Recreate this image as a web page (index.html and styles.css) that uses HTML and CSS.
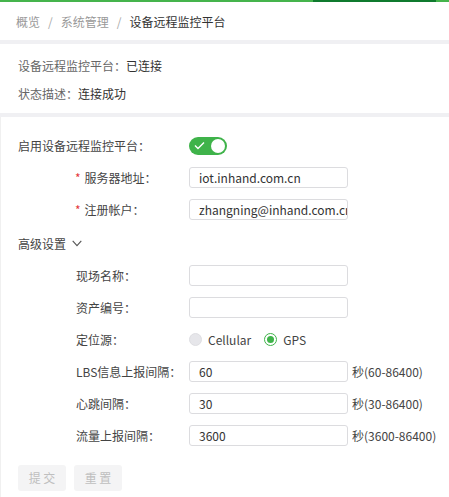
FILE: index.html
```html
<!DOCTYPE html>
<html lang="zh-CN">
<head>
<meta charset="utf-8">
<link rel="stylesheet" href="styles.css">
</head>
<body>
<div class="topbar"><span class="seg1"></span><span class="seg2"></span><span class="seg3"></span></div>
<div class="breadcrumb">
  <span class="crumb">概览</span><span class="sep">/</span><span class="crumb">系统管理</span><span class="sep">/</span><span class="crumb current">设备远程监控平台</span>
</div>
<div class="band"></div>
<div class="status">
  <div class="status-line"><span class="k">设备远程监控平台：</span><span class="v">已连接</span></div>
  <div class="status-line"><span class="k">状态描述：</span><span class="v">连接成功</span></div>
</div>
<div class="band"></div>
<div class="form">
  <div class="row top">
    <div class="label wide">启用设备远程监控平台：</div>
    <div class="toggle">
      <svg class="check" width="11" height="9" viewBox="0 0 11 9"><path d="M1 4.5 L4 7.5 L10 1.5" fill="none" stroke="#fff" stroke-width="1.4"/></svg>
      <span class="knob"></span>
    </div>
  </div>
  <div class="row">
    <div class="label"><span class="req">*</span>服务器地址：</div>
    <div class="input">iot.inhand.com.cn</div>
  </div>
  <div class="row">
    <div class="label"><span class="req">*</span>注册帐户：</div>
    <div class="input">zhangning@inhand.com.cn</div>
  </div>
  <div class="row adv">
    <div class="adv-title">高级设置
      <svg class="chev" width="10" height="7" viewBox="0 0 10 7"><path d="M0.7 0.8 L5 5.6 L9.3 0.8" fill="none" stroke="#555" stroke-width="1.1"/></svg>
    </div>
  </div>
  <div class="row">
    <div class="label">现场名称：</div>
    <div class="input"></div>
  </div>
  <div class="row">
    <div class="label">资产编号：</div>
    <div class="input"></div>
  </div>
  <div class="row">
    <div class="label">定位源：</div>
    <div class="radios">
      <span class="radio off"></span><span class="rtext">Cellular</span>
      <span class="radio on"><span class="dot"></span></span><span class="rtext">GPS</span>
    </div>
  </div>
  <div class="row">
    <div class="label">LBS信息上报间隔：</div>
    <div class="input">60</div>
    <div class="suffix">秒(60-86400)</div>
  </div>
  <div class="row">
    <div class="label">心跳间隔：</div>
    <div class="input">30</div>
    <div class="suffix">秒(30-86400)</div>
  </div>
  <div class="row">
    <div class="label">流量上报间隔：</div>
    <div class="input">3600</div>
    <div class="suffix">秒(3600-86400)</div>
  </div>
  <div class="buttons">
    <div class="btn">提 交</div>
    <div class="btn">重 置</div>
  </div>
</div>
</body>
</html>
```
FILE: styles.css
```css
* { box-sizing: border-box; }
html, body { margin: 0; padding: 0; background: #fff; }
body {
  font-family: "Noto Sans CJK SC", "Liberation Sans", sans-serif;
  font-size: 12px;
  color: #333;
  width: 449px;
  height: 497px;
  overflow: hidden;
}
.topbar { display: flex; height: 2px; }
.topbar .seg1 { width: 313px; background: #45b44c; }
.topbar .seg2 { width: 123px; background: #0f7a2e; }
.topbar .seg3 { flex: 1; background: #45b44c; }
.breadcrumb {
  height: 38px;
  display: flex;
  align-items: center;
  padding-left: 16px;
  color: #999;
}
.breadcrumb .sep { margin: 0 8px; color: #aaa; }
.breadcrumb .current { color: #333; }
.band { height: 4px; background: #f0f0f3; }
.status { padding: 8px 18px 5px; }
.status-line { height: 28px; line-height: 28px; }
.status-line .k { color: #666; }
.status-line .v { color: #333; }
.form {
  padding: 18px 0 0 17px;
  border-left: 1px solid #f0f0f0;
  height: 380px;
}
.row {
  display: flex;
  align-items: center;
  height: 21px;
  margin-top: 11px;
}
.row.top { margin-top: 0; }
.row.adv { margin-top: 13px; }
.label {
  width: 113px;
  margin-left: 58px;
  color: #444;
  white-space: nowrap;
}
.label.wide { width: 171px; margin-left: 0; }
.req { color: #e4393c; margin-right: 4px; margin-left: -1px; }
.input {
  width: 159px;
  height: 21px;
  border: 1px solid #dcdcdf;
  border-radius: 3px;
  padding: 0 9px;
  line-height: 19px;
  color: #333;
  white-space: nowrap;
  overflow: hidden;
}
.suffix { margin-left: 4px; color: #444; white-space: nowrap; }
.toggle {
  position: relative;
  width: 38px;
  height: 18px;
  border-radius: 9px;
  background: #3fb34a;
}
.toggle .check { position: absolute; left: 5px; top: 4.5px; }
.toggle .knob {
  position: absolute;
  right: 2px;
  top: 2px;
  width: 14px;
  height: 14px;
  border-radius: 50%;
  background: #fff;
}
.adv-title { display: flex; align-items: center; color: #444; }
.chev { margin-left: 6px; }
.radios { display: flex; align-items: center; }
.radio {
  width: 13px;
  height: 13px;
  border-radius: 50%;
  display: inline-flex;
  align-items: center;
  justify-content: center;
}
.radio.off { background: #e6e6ea; border: 1px solid #dedee2; }
.radio.on { border: 1px solid #3fb34a; background: #fff; margin-left: 13px; }
.radio .dot { width: 7px; height: 7px; border-radius: 50%; background: #3fb34a; }
.rtext { margin-left: 6px; color: #444; }
.buttons { display: flex; gap: 8px; margin-top: 19px; }
.btn {
  width: 48px;
  height: 26px;
  line-height: 26px;
  text-align: center;
  background: #f4f4f5;
  border-radius: 3px;
  color: #bfbfbf;
  font-size: 12px;
}
```
